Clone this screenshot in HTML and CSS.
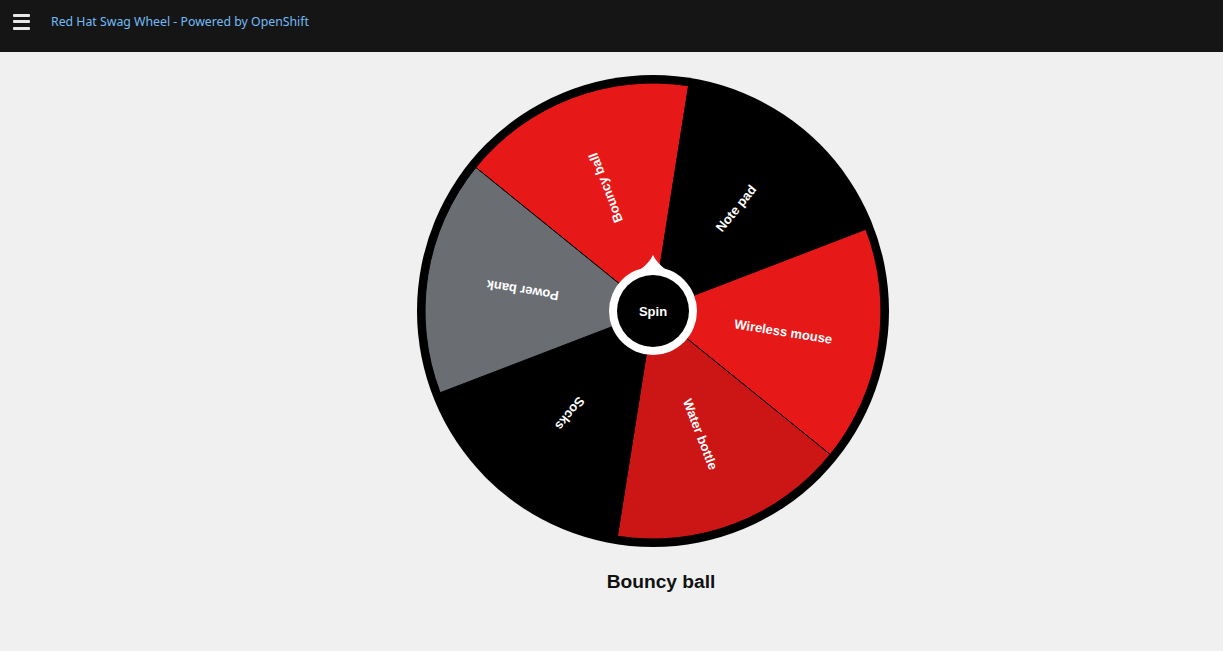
FILE: index.html
```html
<!DOCTYPE html>
<html lang="en">
<head>
<meta charset="utf-8">
<title>Red Hat Swag Wheel</title>
<link rel="stylesheet" href="styles.css">
</head>
<body>
<header class="topbar">
  <button class="menu-btn" aria-label="Menu">
    <span class="bar"></span><span class="bar"></span><span class="bar"></span>
  </button>
  <span class="title">Red Hat Swag Wheel - Powered by OpenShift</span>
</header>
<main class="stage">
  <div class="wheel">
    <svg class="wheel-svg" width="472" height="472" viewBox="0 0 472 472">
      <circle cx="236" cy="236" r="236" fill="#000"/>
      <g stroke="#000" stroke-width="1">
        <path d="M236,236 L58.81,92.51 A228,228 0 0 1 271.67,10.81 Z" fill="#e61818"/>
        <path d="M236,236 L271.67,10.81 A228,228 0 0 1 448.86,154.29 Z" fill="#000"/>
        <path d="M236,236 L448.86,154.29 A228,228 0 0 1 413.19,379.49 Z" fill="#e61818"/>
        <path d="M236,236 L413.19,379.49 A228,228 0 0 1 200.33,461.19 Z" fill="#cc1616"/>
        <path d="M236,236 L200.33,461.19 A228,228 0 0 1 23.14,317.71 Z" fill="#000"/>
        <path d="M236,236 L23.14,317.71 A228,228 0 0 1 58.81,92.51 Z" fill="#6a6e73"/>
      </g>
      <g class="labels">
        <text transform="rotate(249 236 236)" x="368" y="236">Bouncy ball</text>
        <text transform="rotate(-51 236 236)" x="368" y="236">Note pad</text>
        <text transform="rotate(9 236 236)" x="368" y="236">Wireless mouse</text>
        <text transform="rotate(69 236 236)" x="368" y="236">Water bottle</text>
        <text transform="rotate(129 236 236)" x="368" y="236">Socks</text>
        <text transform="rotate(189 236 236)" x="368" y="236">Power bank</text>
      </g>
      <path d="M236,180 C239,186 243,190 248,194 L224,194 C229,190 233,186 236,180 Z" fill="#fff"/>
      <circle cx="236" cy="236" r="44" fill="#fff"/>
      <circle cx="236" cy="236" r="36" fill="#000"/>
    </svg>
    <button class="spin-btn">Spin</button>
  </div>
  <p class="result">Bouncy ball</p>
</main>
</body>
</html>
```
FILE: styles.css
```css
html, body {
  margin: 0;
  padding: 0;
}
body {
  background: #f0f0f0;
  font-family: "Liberation Sans", Arial, sans-serif;
  min-height: 651px;
}
.topbar {
  height: 52px;
  background: #151515;
  display: flex;
  align-items: center;
  padding-left: 13px;
  box-sizing: border-box;
}
.menu-btn {
  background: none;
  border: 0;
  padding: 0;
  width: 17px;
  height: 16px;
  display: flex;
  flex-direction: column;
  justify-content: space-between;
  margin-top: -9px;
  margin-right: 21px;
  cursor: pointer;
}
.menu-btn .bar {
  display: block;
  width: 17px;
  height: 3px;
  background: #e8e8e8;
  border-radius: 1px;
}
.title {
  font-family: "Noto Sans", "Open Sans", sans-serif;
  font-size: 12.3px;
  color: #73bcf7;
  margin-top: -9px;
}
.stage {
  display: flex;
  flex-direction: column;
  align-items: center;
  padding-top: 23px;
  padding-left: 83px;
  width: 1140px;
  box-sizing: content-box;
  margin: 0 auto 0 0;
}
.wheel {
  position: relative;
  width: 472px;
  height: 472px;
}
.wheel-svg {
  display: block;
}
.labels text {
  fill: #fff;
  font-family: "Liberation Sans", Arial, sans-serif;
  font-weight: bold;
  font-size: 13px;
  text-anchor: middle;
  dominant-baseline: central;
}
.spin-btn {
  position: absolute;
  left: 200px;
  top: 200px;
  width: 72px;
  height: 72px;
  border-radius: 50%;
  border: 0;
  background: transparent;
  color: #fff;
  font-family: "Liberation Sans", Arial, sans-serif;
  font-weight: bold;
  font-size: 13px;
  cursor: pointer;
  padding: 0;
}
.result {
  margin: 24px 0 0 16px;
  font-family: "Liberation Sans", Arial, sans-serif;
  font-weight: bold;
  font-size: 19.2px;
  color: #111;
}
```
